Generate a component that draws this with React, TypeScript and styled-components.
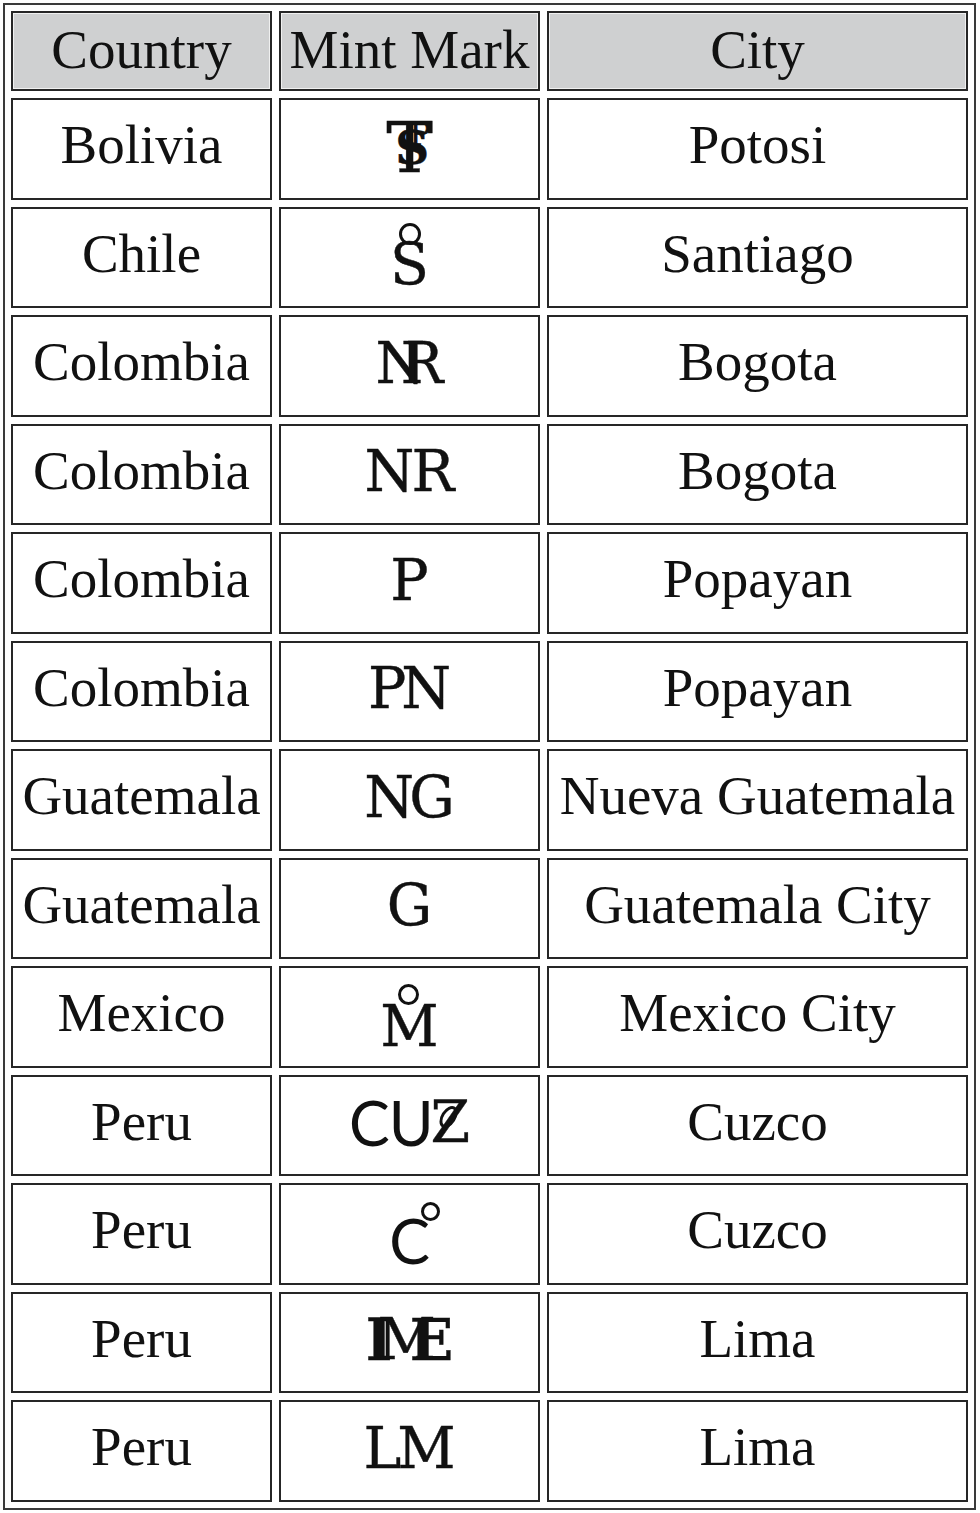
import { Fragment } from "react";
import type { ReactNode } from "react";
import styled, { createGlobalStyle } from "styled-components";

const GlobalStyle = createGlobalStyle`
  body {
    margin: 0;
    background: #fff;
  }
`;

const Table = styled.div`
  margin: 3px;
  width: 973px;
  box-sizing: border-box;
  border: 2px solid #3a3a3a;
  padding: 6px;
  display: grid;
  grid-template-columns: 261px 261px 421px;
  grid-template-rows: 80px repeat(13, 101.5px);
  gap: 7px;
  font-family: "Liberation Serif", "Times New Roman", serif;
  color: #111;
`;

const Cell = styled.div`
  box-sizing: border-box;
  border: 2px solid #262626;
  background: #fff;
  display: flex;
  align-items: center;
  justify-content: center;
  font-size: 55px;
  white-space: nowrap;
  overflow: hidden;
  padding-bottom: 8px;
`;

const HeadCell = styled(Cell)`
  background: #cfd0d1;
  box-shadow: inset 0 0 0 1px #f0f0f0;
  padding-bottom: 4px;
`;

const MarkCell = styled(Cell)`
  padding-bottom: 5px;
`;

// a mint mark: letters set close together, with rings or loops laid over them
const Mark = styled.span<{ $drop?: number; $size?: number }>`
  position: relative;
  display: inline-flex;
  align-items: flex-start;
  margin-top: ${(p) => p.$drop ?? 0}px;
  font-family: "DejaVu Serif", serif;
  font-size: ${(p) => p.$size ?? 57}px;
  line-height: 1;
  color: #111;
  -webkit-text-stroke: 0.4px #111;
`;

const Letter = styled.span<{ $pull?: number; $bold?: boolean; $sans?: boolean }>`
  position: relative;
  display: inline-block;
  margin-left: ${(p) => p.$pull ?? 0}px;
  font-weight: ${(p) => (p.$bold ? 700 : 400)};
  ${(p) =>
    p.$sans
      ? `font-family: Lato, "DejaVu Sans", sans-serif; font-size: 61px; line-height: 57px; -webkit-text-stroke: 0;`
      : ""}
`;

const Over = styled.span<{ $top: number; $left: number; $bold?: boolean; $size?: number }>`
  position: absolute;
  top: ${(p) => p.$top}px;
  left: ${(p) => p.$left}px;
  font-weight: ${(p) => (p.$bold ? 700 : 400)};
  font-size: ${(p) => p.$size ?? 57}px;
`;

const Ring = styled.span<{ $d: number; $top: number; $left: number; $w?: number; $tilt?: number }>`
  position: absolute;
  top: ${(p) => p.$top}px;
  left: ${(p) => p.$left}px;
  width: ${(p) => p.$w ?? p.$d}px;
  height: ${(p) => p.$d}px;
  box-sizing: border-box;
  border: 3px solid #111;
  border-radius: 50%;
  transform: rotate(${(p) => p.$tilt ?? 0}deg);
`;

type MarkKey = "PTS" | "So" | "NRlig" | "NR" | "P" | "PN" | "NG" | "G" | "Mo" | "CUZ" | "Co" | "LIME" | "LM";

function MintMark({ k }: { k: MarkKey }): ReactNode {
  switch (k) {
    case "PTS":
      return (
        <Mark $drop={4} $size={70}>
          <Letter>T</Letter>
          <Over $top={5} $left={23} $size={32}>
            P
          </Over>
          <Over $top={11} $left={9} $bold $size={47}>
            S
          </Over>
        </Mark>
      );
    case "So":
      return (
        <Mark $drop={20}>
          <Letter>S</Letter>
          <Ring $d={22} $top={-13} $left={9} />
        </Mark>
      );
    case "NRlig":
      return (
        <Mark>
          <Letter>N</Letter>
          <Letter $pull={-25}>R</Letter>
        </Mark>
      );
    case "NR":
      return (
        <Mark>
          <Letter>N</Letter>
          <Letter $pull={-3}>R</Letter>
        </Mark>
      );
    case "P":
      return (
        <Mark>
          <Letter>P</Letter>
        </Mark>
      );
    case "PN":
      return (
        <Mark>
          <Letter>P</Letter>
          <Letter $pull={-5}>N</Letter>
        </Mark>
      );
    case "NG":
      return (
        <Mark>
          <Letter>N</Letter>
          <Letter $pull={-5}>G</Letter>
        </Mark>
      );
    case "G":
      return (
        <Mark>
          <Letter>G</Letter>
        </Mark>
      );
    case "Mo":
      return (
        <Mark $drop={25}>
          <Letter>M</Letter>
          <Ring $d={21} $top={-14} $left={18} />
        </Mark>
      );
    case "CUZ":
      return (
        <Mark>
          <Letter $sans>C</Letter>
          <Letter $sans $pull={-1}>
            U
          </Letter>
          <Letter $pull={-3}>
            Z
            <Ring $d={24} $w={15} $top={11} $left={10} $tilt={32} />
          </Letter>
        </Mark>
      );
    case "Co":
      return (
        <Mark $drop={18}>
          <Letter $sans>
            C
            <Ring $d={19} $top={-10} $left={32} />
          </Letter>
        </Mark>
      );
    case "LIME":
      return (
        <Mark>
          <Letter $bold>I</Letter>
          <Letter $pull={-15}>M</Letter>
          <Letter $bold $pull={-26}>
            E
          </Letter>
        </Mark>
      );
    case "LM":
      return (
        <Mark>
          <Letter>L</Letter>
          <Letter $pull={-4}>M</Letter>
        </Mark>
      );
  }
}

const rows: { country: string; mark: MarkKey; city: string }[] = [
  { country: "Bolivia", mark: "PTS", city: "Potosi" },
  { country: "Chile", mark: "So", city: "Santiago" },
  { country: "Colombia", mark: "NRlig", city: "Bogota" },
  { country: "Colombia", mark: "NR", city: "Bogota" },
  { country: "Colombia", mark: "P", city: "Popayan" },
  { country: "Colombia", mark: "PN", city: "Popayan" },
  { country: "Guatemala", mark: "NG", city: "Nueva Guatemala" },
  { country: "Guatemala", mark: "G", city: "Guatemala City" },
  { country: "Mexico", mark: "Mo", city: "Mexico City" },
  { country: "Peru", mark: "CUZ", city: "Cuzco" },
  { country: "Peru", mark: "Co", city: "Cuzco" },
  { country: "Peru", mark: "LIME", city: "Lima" },
  { country: "Peru", mark: "LM", city: "Lima" },
];

export default function App() {
  return (
    <>
      <GlobalStyle />
      <Table>
        <HeadCell>Country</HeadCell>
        <HeadCell>Mint Mark</HeadCell>
        <HeadCell>City</HeadCell>
        {rows.map((r, i) => (
          <Fragment key={i}>
            <Cell>{r.country}</Cell>
            <MarkCell>
              <MintMark k={r.mark} />
            </MarkCell>
            <Cell>{r.city}</Cell>
          </Fragment>
        ))}
      </Table>
    </>
  );
}
